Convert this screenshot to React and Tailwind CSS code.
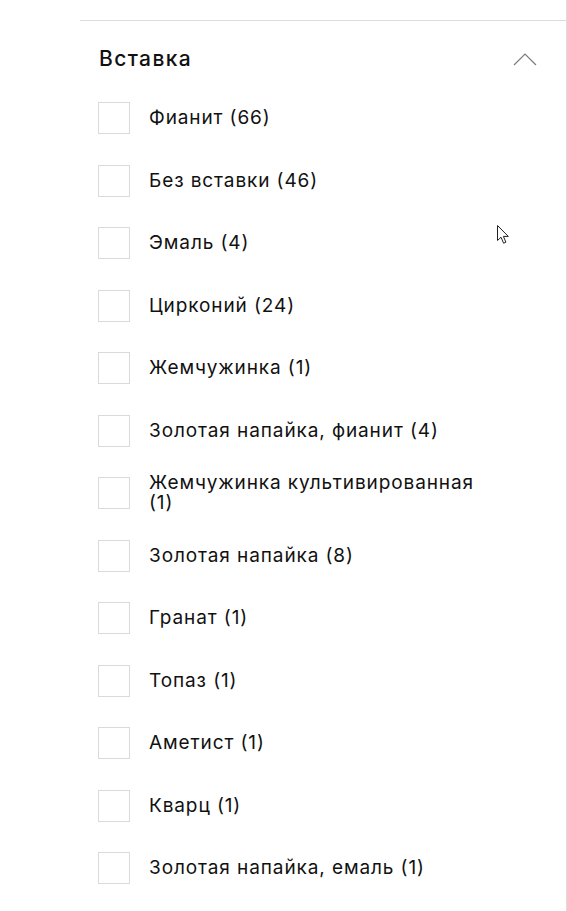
import { useState } from "react";

const items = [
  "Фианит (66)",
  "Без вставки (46)",
  "Эмаль (4)",
  "Цирконий (24)",
  "Жемчужинка (1)",
  "Золотая напайка, фианит (4)",
  "Жемчужинка культивированная (1)",
  "Золотая напайка (8)",
  "Гранат (1)",
  "Топаз (1)",
  "Аметист (1)",
  "Кварц (1)",
  "Золотая напайка, емаль (1)",
];

const App = () => {
  const [open, setOpen] = useState(true);
  const [checked, setChecked] = useState({});

  const toggle = (name) => {
    setChecked({ ...checked, [name]: !checked[name] });
  };

  return (
    <div
      className="relative w-[567px] h-[911px] overflow-hidden bg-white pl-[80px]"
      style={{ fontFamily: "Inter, 'Noto Sans', sans-serif" }}
    >
      <div className="w-[487px] h-full border-r border-[#dcdcdc] pt-[20px]">
        <div className="border-t border-[#dcdcdc]">
          <button
            onClick={() => setOpen(!open)}
            className="flex justify-between items-center w-full pl-[19px] pr-[29px] pt-[26px] text-left"
          >
            <span className="text-[21px] leading-[24px] font-medium text-[#111] tracking-[1.4px]">
              Вставка
            </span>
            <svg width="24" height="14" viewBox="0 0 24 14" fill="none">
              <path
                d={open ? "M1 13L12 2L23 13" : "M1 1L12 12L23 1"}
                stroke="#7a7a80"
                strokeWidth="1.2"
              />
            </svg>
          </button>

          {open && (
            <div className="flex flex-col mt-[16px] pl-[18px]">
              {items.map((name) => (
                <label
                  key={name}
                  className="flex items-center h-[62.5px] cursor-pointer"
                >
                  <span
                    onClick={() => toggle(name)}
                    className="flex shrink-0 justify-center items-center w-[32px] h-[32px] border border-[#dadada] bg-white"
                  >
                    {checked[name] && (
                      <span className="w-[14px] h-[14px] bg-[#111]" />
                    )}
                  </span>
                  <span className="ml-[19px] w-[340px] text-[19px] leading-[20px] text-[#111] tracking-[0.9px]">
                    {name}
                  </span>
                </label>
              ))}
            </div>
          )}
        </div>
      </div>

      <svg
        className="absolute left-[497px] top-[225px]"
        width="13"
        height="20"
        viewBox="0 0 13 20"
      >
        <path
          d="M0.5 0.5L0.5 15.5L4 12.2L6.6 18.2L8.9 17.2L6.4 11.4L11.3 11.4Z"
          fill="white"
          stroke="#222"
          strokeWidth="1"
          strokeLinejoin="round"
        />
      </svg>
    </div>
  );
};

export default App;
